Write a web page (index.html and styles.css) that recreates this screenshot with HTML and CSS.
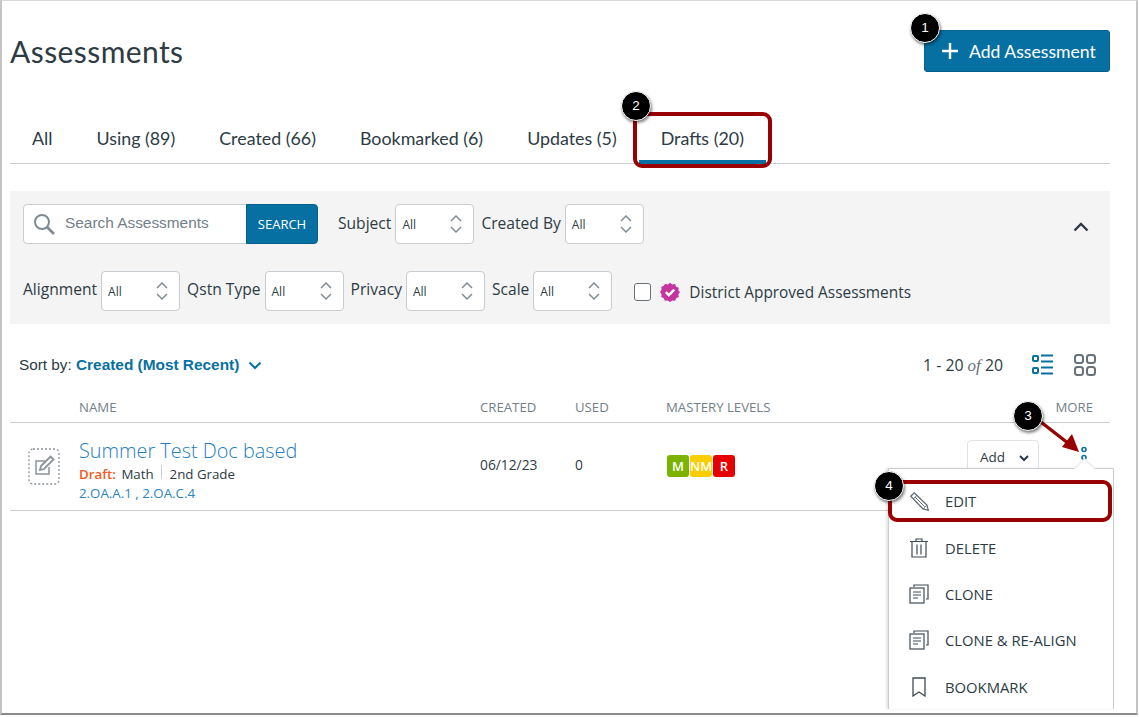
FILE: index.html
```html
<!DOCTYPE html>
<html>
<head>
  <title>Assessments</title>
  <link rel="stylesheet" href="styles.css">
</head>
<body>
  <div class="frame">
    <div class="page">
      <div class="title-bar">
        <h1>Assessments</h1>
        <button class="add-btn">
          <svg width="20" height="20" viewBox="0 0 20 20"><path d="M10 2v16M2 10h16" stroke="#fff" stroke-width="2.4" fill="none"/></svg>
          Add Assessment
        </button>
      </div>

      <div class="tabs">
        <a class="tab">All</a>
        <a class="tab">Using (89)</a>
        <a class="tab">Created (66)</a>
        <a class="tab">Bookmarked (6)</a>
        <a class="tab">Updates (5)</a>
        <a class="tab active">Drafts (20)</a>
      </div>

      <div class="filters">
        <div class="filter-row first">
          <div class="search-box">
            <svg width="24" height="24" viewBox="0 0 24 24"><circle cx="10" cy="10" r="7" stroke="#7f8a92" stroke-width="2" fill="none"/><path d="M15 15l7 7" stroke="#7f8a92" stroke-width="2.6" fill="none"/></svg>
            <span>Search Assessments</span>
          </div>
          <button class="search-btn">SEARCH</button>
          <label class="filter-label subject">Subject</label>
          <div class="select"><span>All</span><svg class="updown" width="14" height="22" viewBox="0 0 14 22"><path d="M2 8l5-5 5 5M2 14l5 5 5-5" stroke="#7f8a92" stroke-width="1.5" fill="none"/></svg></div>
          <label class="filter-label">Created By</label>
          <div class="select"><span>All</span><svg class="updown" width="14" height="22" viewBox="0 0 14 22"><path d="M2 8l5-5 5 5M2 14l5 5 5-5" stroke="#7f8a92" stroke-width="1.5" fill="none"/></svg></div>
          <svg class="collapse" width="16" height="10" viewBox="0 0 16 10"><path d="M1.500 8.500L8 2l6.500 6.500" stroke="#2d3b45" stroke-width="2.4" fill="none"/></svg>
        </div>
        <div class="filter-row second">
          <label class="filter-label">Alignment</label>
          <div class="select"><span>All</span><svg class="updown" width="14" height="22" viewBox="0 0 14 22"><path d="M2 8l5-5 5 5M2 14l5 5 5-5" stroke="#7f8a92" stroke-width="1.5" fill="none"/></svg></div>
          <label class="filter-label">Qstn Type</label>
          <div class="select"><span>All</span><svg class="updown" width="14" height="22" viewBox="0 0 14 22"><path d="M2 8l5-5 5 5M2 14l5 5 5-5" stroke="#7f8a92" stroke-width="1.5" fill="none"/></svg></div>
          <label class="filter-label">Privacy</label>
          <div class="select"><span>All</span><svg class="updown" width="14" height="22" viewBox="0 0 14 22"><path d="M2 8l5-5 5 5M2 14l5 5 5-5" stroke="#7f8a92" stroke-width="1.5" fill="none"/></svg></div>
          <label class="filter-label">Scale</label>
          <div class="select"><span>All</span><svg class="updown" width="14" height="22" viewBox="0 0 14 22"><path d="M2 8l5-5 5 5M2 14l5 5 5-5" stroke="#7f8a92" stroke-width="1.5" fill="none"/></svg></div>
          <div class="approved">
            <span class="checkbox"></span>
            <svg width="20" height="20" viewBox="0 0 20 20"><path d="M10 .8l2.300 1.700 2.800-.4 1.100 2.600 2.600 1.100-.4 2.800L20 10l-1.600 2.300.4 2.800-2.600 1.100-1.100 2.600-2.800-.4L10 20l-2.300-1.600-2.800.4-1.100-2.600L1.200 15.100l.4-2.800L0 10l1.600-2.300-.4-2.800 2.600-1.100L4.900 2.100l2.800.4z" fill="#c4359f"/><path d="M5.800 10.200l3 3 5.400-5.600" stroke="#fff" stroke-width="2.400" fill="none"/></svg>
            <span class="approved-text">District Approved Assessments</span>
          </div>
        </div>
      </div>

      <div class="sort-bar">
        <div class="sort">Sort by: <b>Created (Most Recent)</b>
          <svg width="14" height="9" viewBox="0 0 14 9"><path d="M1.500 1.500L7 7l5.500-5.500" stroke="#0770a3" stroke-width="2" fill="none"/></svg>
        </div>
        <div class="count">1 - 20 <i>of</i> 20</div>
        <div class="views">
          <svg width="24" height="24" viewBox="0 0 24 24"><g stroke="#0770a3" fill="none" stroke-width="2"><rect x="2" y="3" width="5" height="5" rx="1"/><rect x="2" y="15" width="5" height="5" rx="1"/><path d="M10 2.500h12M10 8.500h12M10 14.500h12M10 20.500h12"/></g></svg>
          <svg width="24" height="24" viewBox="0 0 24 24"><g stroke="#66717a" fill="none" stroke-width="2"><rect x="2" y="2" width="8" height="8" rx="2.500"/><rect x="14" y="2" width="8" height="8" rx="2.500"/><rect x="2" y="14" width="8" height="8" rx="2.500"/><rect x="14" y="14" width="8" height="8" rx="2.500"/></g></svg>
        </div>
      </div>

      <div class="table-head">
        <span class="col-name">NAME</span>
        <span class="col-created">CREATED</span>
        <span class="col-used">USED</span>
        <span class="col-mastery">MASTERY LEVELS</span>
        <span class="col-more">MORE</span>
      </div>

      <div class="table-row">
        <div class="doc-icon">
          <svg width="32" height="37" viewBox="0 0 32 37">
            <rect x="1" y="1" width="30" height="35" rx="4" fill="none" stroke="#8b9399" stroke-width="1.300" stroke-dasharray="2 2"/>
            <g fill="none" stroke="#8b9399" stroke-width="1.500" transform="translate(4 6)"><path d="M17 13v7H4V7h9"/><path d="M9 12L18.500 2.500l3 3L12 15l-4 1z" stroke-width="1.800"/></g>
          </svg>
        </div>
        <div class="col-name cell-name">
          <a class="doc-title">Summer Test Doc based</a>
          <div class="doc-meta"><span class="draft">Draft:</span> Math <span class="sep"></span> 2nd Grade</div>
          <div class="doc-tags">2.OA.A.1 , 2.OA.C.4</div>
        </div>
        <div class="col-created cell-val">06/12/23</div>
        <div class="col-used cell-val">0</div>
        <div class="col-mastery levels">
          <span class="lvl green">M</span><span class="lvl yellow">NM</span><span class="lvl red">R</span>
        </div>
        <div class="add-select">Add <svg width="10" height="7" viewBox="0 0 10 7"><path d="M1 1l4 4 4-4" stroke="#2d3b45" stroke-width="2" fill="none"/></svg></div>
      </div>
    </div>

    <svg class="kebab" width="8" height="16" viewBox="0 0 8 16"><g fill="none" stroke="#0770a3" stroke-width="1.600"><circle cx="4" cy="3.500" r="2"/><circle cx="4" cy="11.500" r="2"/></g></svg>

    <div class="menu">
      <div class="menu-item">
        <svg width="21" height="21" viewBox="0 0 24 24"><g fill="none" stroke="#5a6670" stroke-width="1.400"><path d="M2 6l4-4 14.500 14 1.500 6-6-1.500z"/><path d="M5 9l4-4M16 20.500l4.500-4.500M7 7l11 11" stroke-width="1"/></g></svg>
        <span>EDIT</span>
      </div>
      <div class="menu-item">
        <svg width="20" height="20" viewBox="0 0 20 20"><g fill="none" stroke="#3f4c56" stroke-width="1.200"><path d="M1 3.500h18M7 3.500V1h6v2.500M3 3.500v15.500h14V3.500M8 6.500v10M12 6.500v10"/></g></svg>
        <span>DELETE</span>
      </div>
      <div class="menu-item">
        <svg width="20" height="20" viewBox="0 0 20 20"><g fill="none" stroke="#3f4c56" stroke-width="1.200"><path d="M5 3V1h14v14h-2"/><rect x="1" y="4" width="14" height="15"/><path d="M4 8h8M4 11h8M4 14h5"/></g></svg>
        <span>CLONE</span>
      </div>
      <div class="menu-item">
        <svg width="20" height="20" viewBox="0 0 20 20"><g fill="none" stroke="#3f4c56" stroke-width="1.200"><path d="M5 3V1h14v14h-2"/><rect x="1" y="4" width="14" height="15"/><path d="M4 8h8M4 11h8M4 14h5"/></g></svg>
        <span>CLONE &amp; RE-ALIGN</span>
      </div>
      <div class="menu-item">
        <svg width="20" height="20" viewBox="0 0 20 20"><path d="M4 1h12v18l-6-4-6 4z" fill="none" stroke="#3f4c56" stroke-width="1.300"/></svg>
        <span>BOOKMARK</span>
      </div>
    </div>

    <div class="highlight hl-tab"></div>
    <div class="highlight hl-edit"></div>
    <svg class="arrow" width="60" height="50" viewBox="0 0 60 50"><path d="M2 2L38 30" stroke="#990000" stroke-width="3.400" fill="none"/><path d="M44 35L27 30L37 17z" fill="#990000"/></svg>
    <span class="callout c1">1</span>
    <span class="callout c2">2</span>
    <span class="callout c3">3</span>
    <span class="callout c4">4</span>
  </div>
</body>
</html>
```

FILE: styles.css
```css
* {
  box-sizing: border-box;
}
html, body {
  margin: 0;
  padding: 0;
  background: #fff;
  overflow: hidden;
}
body {
  font-family: "Open Sans", sans-serif;
  color: #2d3b45;
}
.frame {
  position: relative;
  width: 1138px;
  height: 715px;
  border: 1px solid #d9d9d9;
  border-left: 2px solid #c4c4c4;
  border-right: 2px solid #c4c4c4;
  border-bottom: 2px solid #8a8a8a;
  overflow: hidden;
}
.page {
  padding: 0 26px 0 8px;
}
.title-bar {
  display: flex;
  justify-content: space-between;
  align-items: flex-start;
  height: 112px;
  padding-top: 29px;
}
h1 {
  font-family: "Lato", sans-serif;
  font-weight: 400;
  font-size: 30px;
  line-height: 40px;
  margin: 1px 0 0;
  letter-spacing: 0.42px;
}
.add-btn {
  width: 186px;
  height: 42px;
  background: #0770a3;
  border: 1px solid #06608c;
  border-radius: 3px;
  color: #fff;
  font-family: "Lato", sans-serif;
  font-size: 17.6px;
  display: flex;
  align-items: center;
  gap: 9px;
  padding: 0 0 0 15px;
}
.tabs {
  display: flex;
  height: 51px;
  border-bottom: 1px solid #c7cdd1;
}
.tab {
  font-family: "Lato", sans-serif;
  font-size: 17.85px;
  line-height: 50px;
  padding: 0 22px;
}
.tab.active {
  border-bottom: 4px solid #0770a3;
  height: 51px;
}
.filters {
  margin-top: 27px;
  height: 133px;
  background: #f4f4f4;
  padding: 13px;
}
.filter-row {
  display: flex;
  align-items: center;
  height: 40px;
}
.filter-row.second {
  margin-top: 27px;
}
.search-box {
  width: 224px;
  height: 40px;
  background: #fff;
  border: 1px solid #c7cdd1;
  border-radius: 4px 0 0 4px;
  display: flex;
  align-items: center;
  gap: 9px;
  padding-left: 8px;
  font-family: "Liberation Sans", sans-serif;
  font-size: 15.4px;
  color: #73808a;
}
.search-box span {
  padding-bottom: 2px;
}
.search-btn {
  width: 72px;
  height: 40px;
  margin-left: -1px;
  background: #0770a3;
  border: 1px solid #06608c;
  border-radius: 0 4px 4px 0;
  color: #fff;
  font-family: "Open Sans", sans-serif;
  font-size: 13px;
  padding: 0;
}
.filter-label {
  font-size: 15.6px;
  margin-right: 4px;
  margin-left: 7px;
  padding-bottom: 5px;
}
.filter-row.first .filter-label {
  padding-bottom: 3px;
}
.filter-row.second .filter-label:first-child {
  margin-left: 0;
}
.filter-label.subject {
  margin-left: 20px;
}
.select {
  width: 79px;
  height: 40px;
  background: #fff;
  border: 1px solid #c7cdd1;
  border-radius: 4px;
  display: flex;
  align-items: center;
  justify-content: space-between;
  padding: 0 10px 0 6px;
  font-size: 12px;
}
.collapse {
  margin-left: auto;
  margin-right: 8px;
  margin-top: 5px;
}
.approved {
  display: flex;
  align-items: center;
  margin-left: 22px;
  font-size: 15.4px;
  padding-top: 2px;
}
.checkbox {
  width: 17px;
  height: 18px;
  border: 1px solid #66717a;
  border-radius: 3px;
  background: #fff;
  margin-right: 9px;
}
.approved-text {
  margin-left: 9px;
}
.sort-bar {
  display: flex;
  align-items: center;
  height: 40px;
  margin-top: 21px;
  margin-bottom: 1px;
  padding-left: 9px;
}
.sort {
  font-family: "Liberation Sans", sans-serif;
  font-size: 15.3px;
  flex: 1;
}
.sort b {
  color: #0770a3;
  font-size: 15.4px;
}
.sort svg {
  margin-left: 4px;
}
.count {
  font-size: 15.8px;
  margin-right: 28px;
}
.count i {
  font-family: "Liberation Serif", serif;
  font-size: 17px;
  color: #66717a;
}
.views {
  display: flex;
  gap: 18px;
  margin-right: 13px;
}
.table-head {
  position: relative;
  height: 33px;
  border-bottom: 1px solid #c7cdd1;
  font-size: 13.2px;
  color: #73808a;
  line-height: 34px;
  margin-top: 5px;
}
.table-head span {
  position: absolute;
}
.col-name { left: 69px; }
.col-created { left: 470px; }
.col-used { left: 565px; }
.col-mastery { left: 656px; }
.col-more { right: 17px; }
.table-row {
  position: relative;
  height: 88px;
  border-bottom: 1px solid #c7cdd1;
}
.table-row > div {
  position: absolute;
}
.doc-icon {
  left: 18px;
  top: 25px;
  width: 32px;
  height: 37px;
}
.doc-icon svg {
  display: block;
}
.cell-name {
  top: 14px;
}
.doc-title {
  display: block;
  font-size: 19.85px;
  font-weight: 300;
  line-height: 28px;
  color: #1f7dbd;
}
.doc-meta {
  font-size: 13.3px;
  line-height: 18px;
}
.draft {
  color: #f15a22;
  font-weight: 600;
  margin-right: 2px;
}
.sep {
  display: inline-block;
  width: 1px;
  height: 14px;
  background: #c7cdd1;
  margin: 0 4px 0 4px;
}
.doc-tags {
  font-size: 13.3px;
  line-height: 18px;
  margin-top: 1px;
  color: #2d84bf;
}
.cell-val {
  top: 32px;
  font-size: 13.8px;
}
.levels {
  top: 32px;
  display: flex;
  gap: 1px;
  margin-left: 1px;
}
.lvl {
  width: 22px;
  height: 22px;
  border-radius: 3px;
  color: #fff;
  font-size: 13px;
  font-weight: 600;
  text-align: center;
  line-height: 22px;
}
.green { background: #7cb300; }
.yellow { background: #f8ce00; }
.red { background: #e60000; }
.add-select {
  left: 957px;
  top: 17px;
  width: 72px;
  height: 36px;
  border: 1px solid #dfe2e4;
  border-radius: 4px;
  font-size: 13.5px;
  line-height: 32px;
  padding-left: 12px;
}
.add-select svg {
  margin-left: 10px;
}
.kebab {
  position: absolute;
  left: 1078px;
  top: 445px;
}
.menu {
  position: absolute;
  left: 886px;
  top: 467px;
  width: 226px;
  height: 241px;
  background: #fff;
  border: 1px solid #c7cdd1;
  border-bottom: none;
  box-shadow: -2px 0 2px rgba(0,0,0,0.1);
  padding-top: 9px;
}
.menu::before {
  content: "";
  position: absolute;
  left: 188px;
  top: -8px;
  width: 14px;
  height: 14px;
  background: #fff;
  transform: rotate(45deg);
  border-left: 1px solid #e4e4e4;
  border-top: 1px solid #e4e4e4;
}
.menu-item {
  display: flex;
  align-items: center;
  height: 46.4px;
  font-size: 14.8px;
  padding-left: 20px;
  position: relative;
}
.menu-item svg {
  position: absolute;
  left: 20px;
}
.menu-item span {
  margin-left: 36px;
}
.highlight {
  position: absolute;
  border: 4px solid #990000;
  border-radius: 9px;
}
.hl-tab {
  left: 631px;
  top: 111px;
  width: 139px;
  height: 56px;
}
.hl-edit {
  left: 886px;
  top: 479px;
  width: 224px;
  height: 42px;
}
.arrow {
  position: absolute;
  left: 1033px;
  top: 416px;
}
.callout {
  position: absolute;
  width: 30px;
  height: 30px;
  border-radius: 50%;
  background: #000;
  border: 1px solid #fff;
  box-shadow: 1px 2px 3px rgba(0,0,0,0.5);
  color: #fff;
  font-family: "Liberation Sans", sans-serif;
  font-size: 13.5px;
  line-height: 28px;
  text-align: center;
}
.c1 { left: 908px; top: 12px; }
.c2 { left: 619px; top: 90px; }
.c3 { left: 1011px; top: 400px; }
.c4 { left: 872px; top: 470px; }
```
